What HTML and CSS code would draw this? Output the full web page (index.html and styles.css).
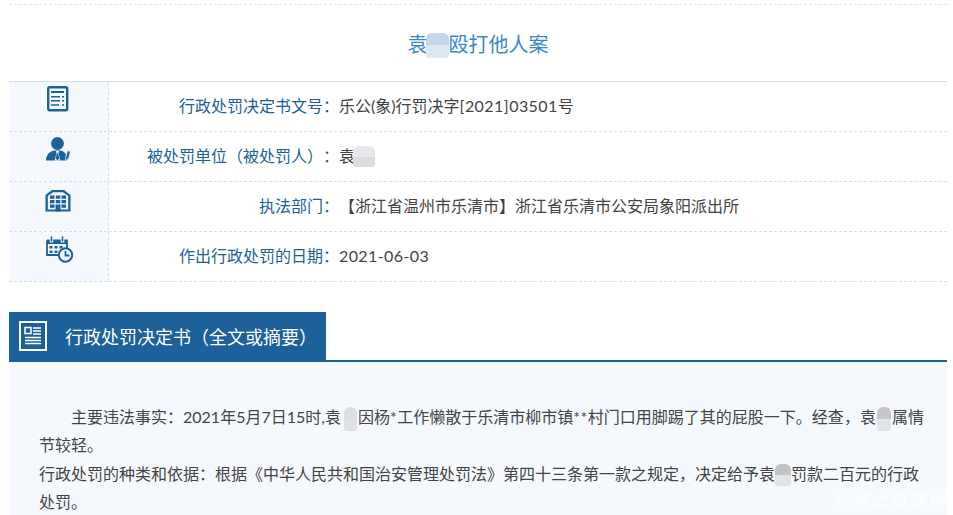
FILE: index.html
```html
<!DOCTYPE html>
<html lang="zh-CN">
<head>
<meta charset="utf-8">
<title>袁某殴打他人案</title>
<link rel="stylesheet" href="styles.css">
</head>
<body>
<main class="page">
  <h1 class="title">袁<span class="blur blur-title"></span>殴打他人案</h1>
  <section class="info">
    <div class="row">
      <div class="icon-cell">
        <svg class="icon" width="26" height="28" viewBox="0 0 26 28"><rect x="1.200" y="1.200" width="19" height="23" rx="1.500" fill="none" stroke="#1c6199" stroke-width="2.400"/><path d="M4 6h13" stroke="#1c6199" stroke-width="2"/><path d="M4 10.800h9M4 14.800h9M4 19h8M15 10.800h2M15 14.800h2M15 19h2" stroke="#1c6199" stroke-width="1.500"/></svg>
      </div>
      <div class="label">行政处罚决定书文号<span class="cp">：</span></div>
      <div class="value">乐公(象)行罚决字<span class="docno">[2021]03501</span>号</div>
    </div>
    <div class="row">
      <div class="icon-cell">
        <svg class="icon icon-person" width="26" height="26" viewBox="0 0 26 26"><circle cx="11.500" cy="6.500" r="6.400" fill="#1c6199"/><path d="M0 23.500c0-5.500 3.500-9 8-10h7c4 1 6 4.500 6 10z" fill="#1c6199"/><path d="M9.800 14h3.400l-.7 2 1.800 7.500H8.700l1.800-7.500z" fill="#f5f9fe"/><path d="M10.700 16.500h1.600l1 5.500-2 1-1.600-1z" fill="#1c6199"/><path d="M19.500 21.500l2-8 3 1-2 7.500-2.500 1.500z" fill="#1c6199" stroke="#f5f9fe" stroke-width=".800"/></svg>
      </div>
      <div class="label">被处罚单位<span class="cp">（</span>被处罚人<span class="cp">）：</span></div>
      <div class="value">袁<span class="blur blur-name"></span></div>
    </div>
    <div class="row">
      <div class="icon-cell">
        <svg class="icon icon-building" width="26" height="24" viewBox="0 0 26 24"><path d="M.500 22.500V6L7 1h12l6.500 5v16.500z" fill="#1c6199"/><path d="M2.800 20.500V7L8 3.200h10L23.200 7v13.500z" fill="#f5f9fe"/><path d="M5 6.500h4.500v3.300H5zM10.800 6.500h4.500v3.300h-4.500zM16.500 6.500H21v3.300h-4.500zM5 11h4.500v3.300H5zM10.800 11h4.500v3.300h-4.500zM16.500 11H21v3.300h-4.500zM5 15.500h4.500v3.300H5zM16.500 15.500H21v3.300h-4.500zM10.500 15.500h5v7h-5z" fill="#1c6199"/></svg>
      </div>
      <div class="label">执法部门<span class="cp">：</span></div>
      <div class="value">【浙江省温州市乐清市】浙江省乐清市公安局象阳派出所</div>
    </div>
    <div class="row">
      <div class="icon-cell">
        <svg class="icon icon-cal" width="28" height="28" viewBox="0 0 28 28"><path d="M1 4.500h20v9M14 19H1V4.500" fill="none" stroke="#1c6199" stroke-width="1.800"/><path d="M1 4h20v4H1z" fill="#1c6199"/><path d="M5.500.500v6M16.500.500v6" stroke="#f5f9fe" stroke-width="3.500"/><path d="M5.500.500v5M16.500.500v5" stroke="#1c6199" stroke-width="1.600"/><path d="M3.500 10h3v2.500h-3zM8.500 10h3v2.500h-3zM13.500 10h3v2.500h-3zM3.500 14.500h3V17h-3zM8.500 14.500h3V17h-3z" fill="#1c6199"/><circle cx="19.500" cy="19" r="6.700" fill="#f5f9fe" stroke="#1c6199" stroke-width="2"/><path d="M19.500 15v4.500h4" fill="none" stroke="#1c6199" stroke-width="1.800"/></svg>
      </div>
      <div class="label">作出行政处罚的日期<span class="cp">：</span></div>
      <div class="value date">2021-06-03</div>
    </div>
  </section>
  <section class="doc">
    <header class="doc-head">
      <h2 class="doc-title">
        <svg class="doc-icon" width="28" height="30" viewBox="0 0 28 30"><rect x="1" y="1" width="26" height="28" fill="none" stroke="#fff" stroke-width="2"/><rect x="6" y="6.500" width="6" height="6" fill="none" stroke="#fff" stroke-width="1.500"/><path d="M14 7h8M14 10h8M14 13h8M6 16.500h16M6 19.500h16M6 22.500h16" stroke="#fff" stroke-width="1.300"/></svg>
        <span>行政处罚决定书<span class="cp">（</span>全文或摘要<span class="cp">）</span></span>
      </h2>
    </header>
    <div class="doc-body">
      <p class="fact">主要违法事实<span class="cp">：</span>2021年5月7日15时,袁<span class="blur blur-a"></span>因杨<span class="star">*</span>工作懒散于乐清市柳市镇<span class="star">**</span>村门口用脚踢了其的屁股一下。经查<span class="cp">，</span>袁<span class="blur blur-b"></span>属情节较轻。</p>
      <p class="basis">行政处罚的种类和依据<span class="cp">：</span>根据《中华人民共和国治安管理处罚法》第四十三条第一款之规定<span class="cp">，</span>决定给予袁<span class="blur blur-c"></span>罚款二百元的行政处罚。</p>
      <div class="watermark">乐清上班族网</div>
    </div>
  </section>
</main>
</body>
</html>
```

FILE: styles.css
```css
html, body {
  margin: 0;
  padding: 0;
  height: 515px;
  overflow: hidden;
  background: #fff;
}

body {
  font-family: "Lato", "Noto Sans CJK SC", "Liberation Sans", sans-serif;
  font-size: 16px;
  color: #444;
  text-spacing-trim: space-all;
}

.cp {
  font-family: "Noto Sans CJK TC", sans-serif;
  line-height: 1;
}

.star {
  letter-spacing: .5px;
}

.docno {
  letter-spacing: .45px;
}

.date {
  letter-spacing: .4px;
}

.page {
  margin: 0 6px 0 9px;
  padding-top: 4px;
}

.title {
  margin: 0;
  display: flex;
  align-items: center;
  justify-content: center;
  border-top: 1px dashed #dbe7f3;
  border-bottom: 1px solid #cfdfec;
  box-sizing: border-box;
  height: 78px;
  font-size: 20px;
  font-weight: 400;
  color: #3b88c8;
}

.blur {
  position: relative;
  display: inline-block;
  height: 1em;
}

.blur::after {
  content: "";
  position: absolute;
  border-radius: 6px 6px 3px 3px;
}

.blur-title { width: 21px; }
.blur-title::after {
  left: -2px; top: 0; width: 23px; height: 25px;
  background: linear-gradient(#c6d6ea 50%, #dde6f3 50%);
}

.blur-name { width: 16px; }
.blur-name::after {
  left: -2px; top: 0; width: 22px; height: 21px;
  background: linear-gradient(#e8e8ea 50%, #dcdbde 50%);
}

.blur-a { width: 17px; }
.blur-a::after {
  left: 3px; top: 0; width: 13px; height: 24px;
  background: linear-gradient(#dedee2 50%, #e0e1e6 50%);
}

.blur-b { width: 16px; }
.blur-b::after {
  left: 1px; top: 0; width: 14px; height: 24px;
  background: linear-gradient(#c6c6cc 50%, #e1e4ea 50%);
}

.blur-c { width: 16px; }
.blur-c::after {
  left: 0; top: 0; width: 16px; height: 22px;
  background: linear-gradient(#c2c2c6 50%, #e0e3e8 50%);
}

.row {
  display: flex;
  height: 50px;
  box-sizing: border-box;
  border-bottom: 1px dashed #d2e1f1;
}

.icon-cell {
  flex: 0 0 100px;
  box-sizing: border-box;
  border-right: 1px dashed #d2e1f1;
  background: #f5f9fe;
  display: flex;
  justify-content: center;
  align-items: flex-start;
}

.icon {
  margin-top: 4px;
  margin-left: 3px;
}

.icon-person { margin-top: 5px; margin-left: 1px; }
.icon-building { margin-top: 7px; margin-left: -2px; }
.icon-cal { margin-top: 4px; margin-left: 2px; }

.label {
  flex: 0 0 230px;
  box-sizing: border-box;
  text-align: right;
  line-height: 47px;
  color: #1c6199;
}

.value {
  line-height: 47px;
  color: #444;
}

.doc {
  margin-top: 30px;
}

.doc-head {
  border-bottom: 2px solid #1c6199;
  background: #fff;
}

.doc-title {
  margin: 0;
  width: 317px;
  height: 48px;
  box-sizing: border-box;
  padding-left: 10px;
  display: flex;
  align-items: center;
  gap: 18px;
  background: #1c6199;
  color: #fff;
  font-size: 18px;
  font-weight: 400;
}

.doc-body {
  position: relative;
  height: 153px;
  box-sizing: border-box;
  padding: 41px 20px 0 30px;
  background: #f5f9fe;
  line-height: 28.300px;
  color: #444;
}

.doc-body p {
  margin: 0;
}

.fact {
  text-indent: 32px;
}

.watermark {
  position: absolute;
  right: 0;
  bottom: 6px;
  font-size: 17px;
  font-style: italic;
  font-weight: 700;
  letter-spacing: 2px;
  line-height: 20px;
  color: #fff;
  opacity: .6;
}
```
